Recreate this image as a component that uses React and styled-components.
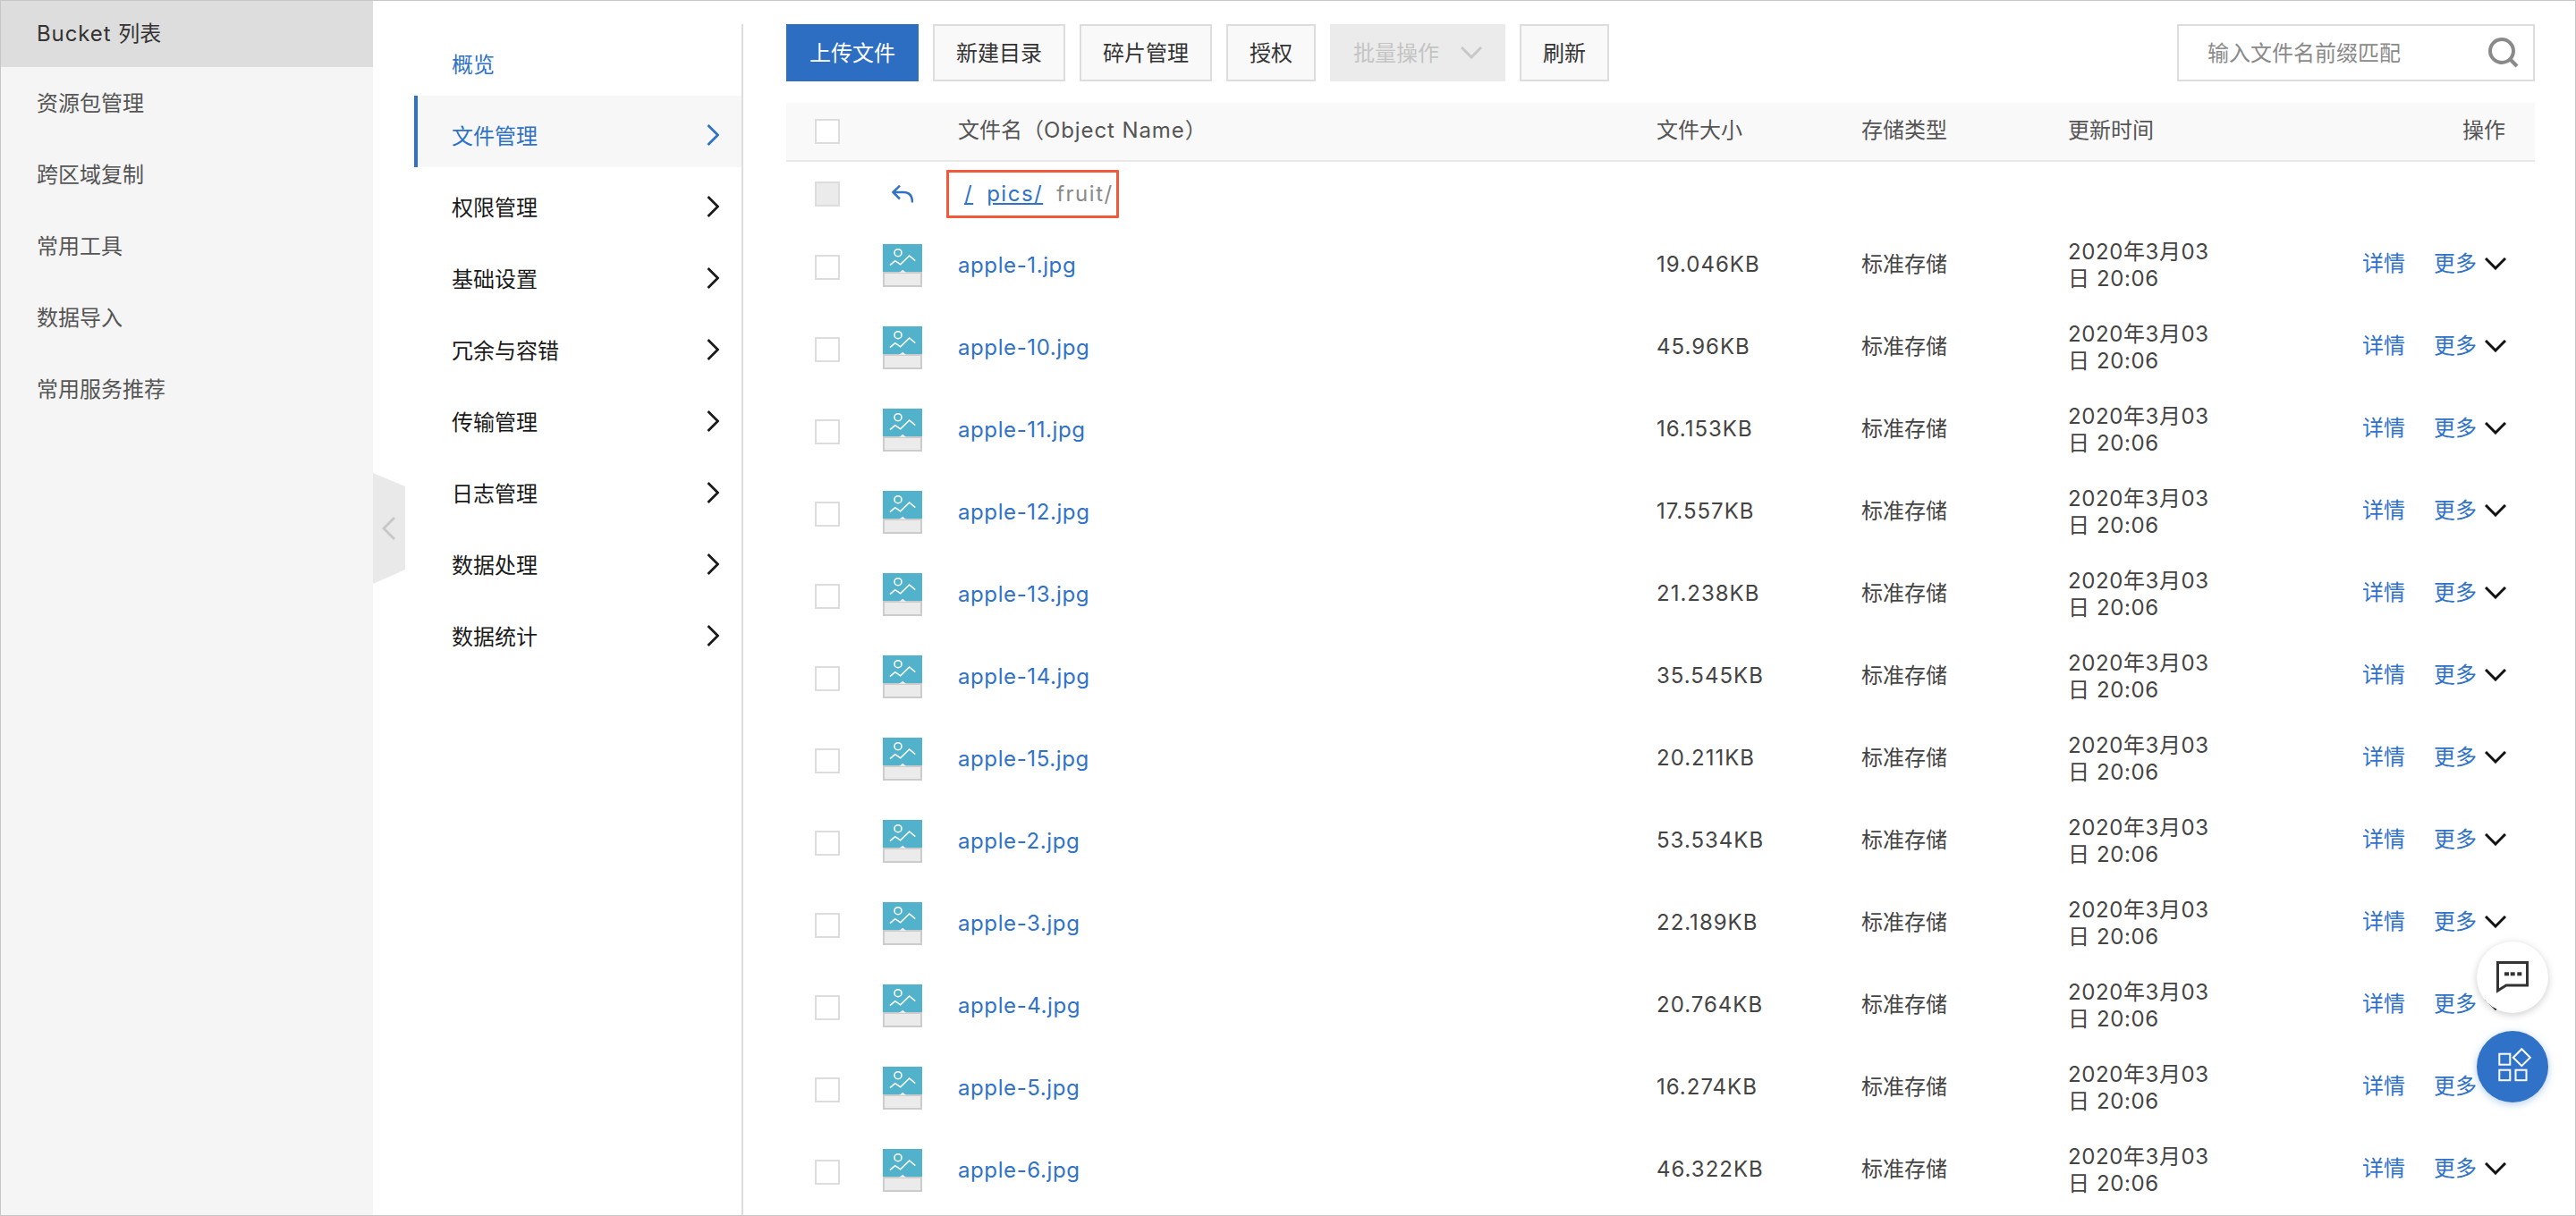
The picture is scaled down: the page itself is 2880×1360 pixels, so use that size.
import React from "react";
import styled, { createGlobalStyle } from "styled-components";

const BLUE = "#2f72c7";
const COLS = "96px 96px 781px 229px 231px 170px 1fr";

const Global = createGlobalStyle`
  html, body { margin: 0; padding: 0; background: #fff; }
  * { box-sizing: border-box; }
  body { font-family: Inter, "Noto Sans CJK SC", sans-serif; font-size: 24px; color: #444; }
`;

const Frame = styled.div`
  position: relative;
  width: 2880px;
  height: 1360px;
  overflow: hidden;
  display: flex;
  border: 1px solid #c6c6c6;
  background: #fff;
`;
const Sidebar = styled.aside`
  width: 416px;
  flex: none;
  background: #f5f5f5;
`;
const SideItem = styled.div`
  height: ${(p) => (p.$active ? 74 : 80)}px;
  display: flex;
  align-items: center;
  padding: ${(p) => (p.$active ? 0 : 2)}px 0 0 40px;
  line-height: 1;
  color: ${(p) => (p.$active ? "#333" : "#555")};
  background: ${(p) => (p.$active ? "#dddddd" : "transparent")};
  white-space: pre;
`;
const Spaced = styled.span`
  letter-spacing: 0.9px;
`;
const Handle = styled.div`
  position: absolute;
  left: 416px;
  top: 528px;
  width: 36px;
  height: 124px;
  background: #e9e9e9;
  clip-path: polygon(0 0, 100% 12%, 100% 87%, 0 100%);
  display: flex;
  align-items: center;
  padding-left: 10px;
`;
const SubNav = styled.nav`
  width: 414px;
  flex: none;
  margin-top: 26px;
  padding-left: 46px;
  border-right: 2px solid #dddddd;
`;
const NavItem = styled.div`
  height: 80px;
  display: flex;
  align-items: center;
  justify-content: space-between;
  padding: 12px 25px 0 38px;
  border-left: 4px solid ${(p) => (p.$active ? BLUE : "transparent")};
  background: ${(p) => (p.$active ? "#f7f7f7" : "transparent")};
  color: ${(p) => (p.$blue ? BLUE : "#1a1a1a")};
  line-height: 1;
  svg {
    margin-top: -4px;
  }
`;
const Main = styled.main`
  flex: 1;
  min-width: 0;
  padding: 26px 45px 0 48px;
`;
const Toolbar = styled.div`
  display: flex;
  gap: 16px;
  margin-bottom: 24px;
`;
const Button = styled.div`
  height: 64px;
  padding: 2px 24px 0;
  display: flex;
  align-items: center;
  justify-content: center;
  gap: 24px;
  line-height: 1;
  border: 2px solid #dddddd;
  background: #f9f9f9;
  color: #333;
`;
const PrimaryButton = styled(Button)`
  border-color: #2d6dc2;
  background: #2d6dc2;
  color: #fff;
`;
const DisabledButton = styled(Button)`
  border-color: #ebebeb;
  background: #ebebeb;
  color: #c4c4c4;
  svg {
    margin-top: -2px;
  }
`;
const Search = styled.div`
  margin-left: auto;
  width: 400px;
  height: 64px;
  display: flex;
  align-items: center;
  justify-content: space-between;
  padding: 2px 16px 0 32px;
  border: 2px solid #dddddd;
  background: #fff;
  color: #8a8a8a;
  line-height: 1;
  svg {
    margin-top: -2px;
  }
`;
const Grid = styled.div`
  display: grid;
  grid-template-columns: ${COLS};
  align-items: center;
`;
const HeaderRow = styled(Grid)`
  height: 66px;
  background: #f9f9f9;
  border-bottom: 2px solid #e8e8e8;
  color: #555;
  line-height: 1;
`;
const CrumbRow = styled(Grid)`
  height: 72px;
`;
const FileRow = styled(Grid)`
  height: 92px;
`;
const CheckCell = styled.div`
  padding-left: 32px;
  display: flex;
  align-items: center;
`;
const Check = styled.span`
  display: block;
  width: 28px;
  height: 28px;
  border: 2px solid #dddddd;
  background: ${(p) => (p.$disabled ? "#ebebeb" : "#fff")};
`;
const IconCell = styled.div`
  padding-left: 12px;
  display: flex;
  align-items: center;
  padding-bottom: 4px;
`;
const BackCell = styled.div`
  padding-left: 22px;
  display: flex;
  align-items: center;
`;
const NameCell = styled.div`
  padding-bottom: 4px;
  line-height: 1;
`;
const NameLink = styled.a`
  color: ${BLUE};
  letter-spacing: 0.6px;
`;
const SizeCell = styled.div`
  padding-bottom: 7px;
  letter-spacing: 1px;
  line-height: 1.3;
  color: #444;
`;
const TypeCell = styled.div`
  padding-bottom: 7px;
  line-height: 1.3;
  color: #444;
`;
const HeaderCell = styled.div`
  padding-bottom: 2px;
  text-align: ${(p) => (p.$right ? "right" : "left")};
  padding-right: ${(p) => (p.$right ? "33px" : "0")};
`;
const TimeCell = styled.div`
  letter-spacing: 0.6px;
  line-height: 30px;
  padding-bottom: 5px;
  color: #444;
`;
const Actions = styled.div`
  display: flex;
  align-items: center;
  justify-content: flex-end;
  padding: 0 32px 8px 0;
  line-height: 1;
  color: ${BLUE};
`;
const MoreLink = styled.span`
  margin-left: 32px;
  margin-right: 9px;
`;
const Crumb = styled.div`
  margin-left: -13px;
  width: 193px;
  height: 54px;
  display: flex;
  align-items: center;
  gap: 15px;
  padding-left: 17px;
  border: 3px solid #f2593a;
  border-radius: 1px;
  line-height: 1;
  letter-spacing: 1.5px;
`;
const CrumbLink = styled.a`
  color: ${BLUE};
  text-decoration: underline;
`;
const CrumbHere = styled.span`
  color: #8a8a8a;
`;
const Fab = styled.div`
  position: absolute;
  right: 30px;
  bottom: ${(p) => p.$bottom}px;
  width: 80px;
  height: 80px;
  border-radius: 50%;
  display: flex;
  align-items: center;
  justify-content: center;
  background: ${(p) => (p.$blue ? BLUE : "#fff")};
  box-shadow: ${(p) => (p.$blue ? "0 2px 8px rgba(47,114,199,.35)" : "0 2px 8px rgba(0,0,0,.2)")};
`;

const Chevron = ({ color = "#1a1a1a" }) => (
  <svg width="14" height="24" viewBox="0 0 14 24" fill="none">
    <path d="M1.5 1 L12.5 12 L1.5 23" stroke={color} strokeWidth="2.8" />
  </svg>
);
const Down = ({ color = "#111", w = 24 }) => (
  <svg width={w} height="14" viewBox="0 0 24 14" fill="none">
    <path d="M1 1 L12 12 L23 1" stroke={color} strokeWidth="3" />
  </svg>
);
const FileIcon = () => (
  <svg width="44" height="48" viewBox="0 0 44 48">
    <rect width="44" height="32" fill="#52b1cb" />
    <rect x="1" y="32" width="42" height="15" fill="#ebebeb" stroke="#cccccc" strokeWidth="2" />
    <path d="M18 32 L22.3 28.7 L26.3 32Z" fill="#ebebeb" />
    <circle cx="17" cy="9.7" r="4" fill="none" stroke="#fff" strokeWidth="1.6" />
    <path d="M8 23.7 L13.7 18.7 L19.7 22.7 L29.7 13 L36.3 18.7" fill="none" stroke="#fff" strokeWidth="1.6" />
  </svg>
);
const BackArrow = () => (
  <svg width="24" height="20" viewBox="0 0 24 20" fill="none">
    <path d="M9 .7 L1.5 8 L9 15.5 M1.5 8 H13 Q23 8 23 19.5" stroke={BLUE} strokeWidth="2.5" />
  </svg>
);
const SearchIcon = () => (
  <svg width="34" height="34" viewBox="0 0 34 34" fill="none">
    <circle cx="15" cy="15" r="13" stroke="#8a8a8a" strokeWidth="4" />
    <path d="M24 24 L32 32" stroke="#8a8a8a" strokeWidth="4" />
  </svg>
);
const ChatIcon = () => (
  <svg width="36" height="36" viewBox="0 0 36 36" fill="none">
    <path d="M1.5 1.5 H34.5 V27 H11 L1.5 33 Z" stroke="#333" strokeWidth="3" />
    <rect x="9" y="12.3" width="5" height="4" fill="#333" />
    <rect x="15.7" y="12.3" width="5" height="4" fill="#333" />
    <rect x="23.3" y="12.3" width="5" height="4" fill="#333" />
  </svg>
);
const AppsIcon = () => (
  <svg width="80" height="80" viewBox="0 0 80 80" fill="none" stroke="#fff" strokeWidth="2">
    <rect x="25.3" y="25.7" width="12" height="12" />
    <rect x="25.3" y="43.7" width="12" height="11.5" />
    <rect x="43.5" y="43.7" width="12" height="11.5" />
    <path d="M50.3 20.2 L59.8 29.7 L50.3 39.2 L40.8 29.7 Z" />
  </svg>
);

const sideItems = ["资源包管理", "跨区域复制", "常用工具", "数据导入", "常用服务推荐"];
const navItems = ["权限管理", "基础设置", "冗余与容错", "传输管理", "日志管理", "数据处理", "数据统计"];
const files = [
  ["apple-1.jpg", "19.046KB"],
  ["apple-10.jpg", "45.96KB"],
  ["apple-11.jpg", "16.153KB"],
  ["apple-12.jpg", "17.557KB"],
  ["apple-13.jpg", "21.238KB"],
  ["apple-14.jpg", "35.545KB"],
  ["apple-15.jpg", "20.211KB"],
  ["apple-2.jpg", "53.534KB"],
  ["apple-3.jpg", "22.189KB"],
  ["apple-4.jpg", "20.764KB"],
  ["apple-5.jpg", "16.274KB"],
  ["apple-6.jpg", "46.322KB"],
];

export default function App() {
  return (
    <>
      <Global />
      <Frame>
        <Sidebar>
          <SideItem $active>
            <Spaced>Bucket </Spaced>列表
          </SideItem>
          {sideItems.map((s) => (
            <SideItem key={s}>{s}</SideItem>
          ))}
        </Sidebar>
        <Handle>
          <svg width="16" height="26" viewBox="0 0 16 26" fill="none">
            <path d="M14 1 L2 13 L14 25" stroke="#c8c8c8" strokeWidth="3" />
          </svg>
        </Handle>
        <SubNav>
          <NavItem $blue>概览</NavItem>
          <NavItem $blue $active>
            文件管理
            <Chevron color={BLUE} />
          </NavItem>
          {navItems.map((s) => (
            <NavItem key={s}>
              {s}
              <Chevron />
            </NavItem>
          ))}
        </SubNav>
        <Main>
          <Toolbar>
            <PrimaryButton>上传文件</PrimaryButton>
            <Button>新建目录</Button>
            <Button>碎片管理</Button>
            <Button>授权</Button>
            <DisabledButton>
              批量操作
              <Down color="#c8c8c8" />
            </DisabledButton>
            <Button>刷新</Button>
            <Search>
              输入文件名前缀匹配
              <SearchIcon />
            </Search>
          </Toolbar>
          <HeaderRow>
            <CheckCell>
              <Check />
            </CheckCell>
            <div />
            <HeaderCell>
              文件名（<Spaced>Object Name</Spaced>）
            </HeaderCell>
            <HeaderCell>文件大小</HeaderCell>
            <HeaderCell>存储类型</HeaderCell>
            <HeaderCell>更新时间</HeaderCell>
            <HeaderCell $right>操作</HeaderCell>
          </HeaderRow>
          <CrumbRow>
            <CheckCell>
              <Check $disabled />
            </CheckCell>
            <BackCell>
              <BackArrow />
            </BackCell>
            <Crumb>
              <CrumbLink>/</CrumbLink>
              <CrumbLink>pics/</CrumbLink>
              <CrumbHere>fruit/</CrumbHere>
            </Crumb>
          </CrumbRow>
          {files.map(([name, size]) => (
            <FileRow key={name}>
              <CheckCell>
                <Check />
              </CheckCell>
              <IconCell>
                <FileIcon />
              </IconCell>
              <NameCell>
                <NameLink>{name}</NameLink>
              </NameCell>
              <SizeCell>{size}</SizeCell>
              <TypeCell>标准存储</TypeCell>
              <TimeCell>2020年3月03日 20:06</TimeCell>
              <Actions>
                详情
                <MoreLink>更多</MoreLink>
                <Down />
              </Actions>
            </FileRow>
          ))}
        </Main>
        <Fab $bottom={226}>
          <ChatIcon />
        </Fab>
        <Fab $blue $bottom={126}>
          <AppsIcon />
        </Fab>
      </Frame>
    </>
  );
}
